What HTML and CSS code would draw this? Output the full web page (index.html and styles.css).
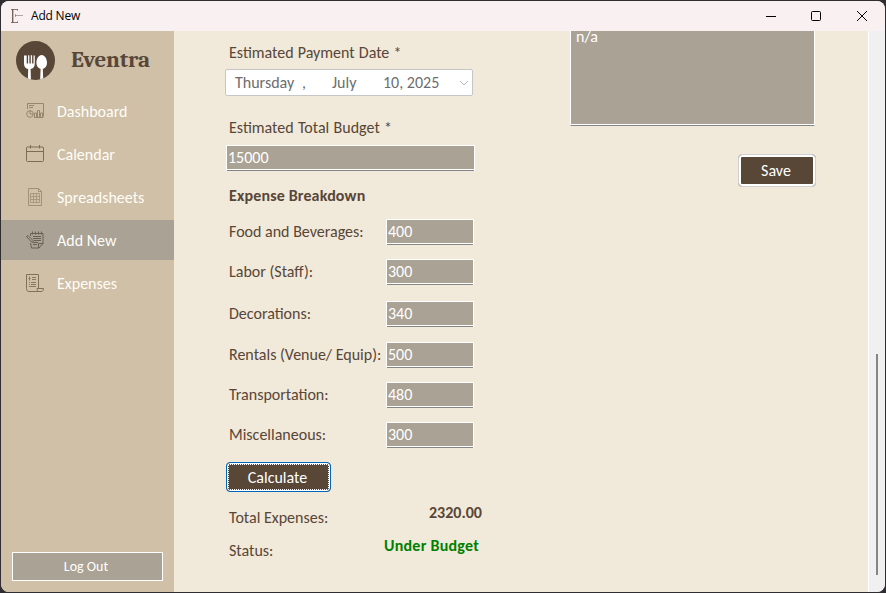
FILE: index.html
```html
<!DOCTYPE html>
<html lang="en">
<head>
<meta charset="utf-8">
<title>Add New</title>
<link rel="stylesheet" href="styles.css">
</head>
<body>
<div class="window">
  <header class="titlebar">
    <svg class="app-icon" width="14" height="16" viewBox="0 0 14 16" fill="none" stroke="#6b5a50"><path d="M8 1.5H1M8 14.5H1" stroke-width=".8"/><path d="M2.700 1v14" stroke-width="1.300"/><path d="M5 7.500h8M7.500 1v2M7.500 13v2M5.500 6v3" stroke-width=".5"/></svg>
    <span class="title">Add New</span>
    <svg class="controls" width="102" height="12" viewBox="0 0 102 12" fill="none" stroke="#000"><path d="M0 6.500h10"/><rect x="45.500" y="1.500" width="9" height="9" rx="1"/><path d="M91 1l10 10M101 1L91 11"/></svg>
  </header>
  <div class="body">
    <nav class="sidebar">
      <div class="brand">
        <svg width="39" height="39" viewBox="0 0 39 39"><defs><clipPath id="disc"><circle cx="19.500" cy="19.500" r="19.500"/></clipPath></defs><circle cx="19.500" cy="19.500" r="19.500" fill="#584637"/><g clip-path="url(#disc)" fill="#fff"><path d="M8 14.500v8c0 3.200 1.500 5 4.200 5.500l-.4 12h3.200l-.4-12c2.700-.5 4.200-2.300 4.200-5.500v-8h-1.300v8h-1.400v-8.300h-1.300v8.300h-1.400v-8.300h-1.300v8.300h-1.400v-8z"/><path d="M25.700 14c-3.100 0-5.300 3.800-5.300 7.800 0 3.200 1.500 5.400 4.200 6.100l-.5 12h3.200l-.5-12c2.700-.7 4.200-2.900 4.200-6.100 0-4-2.200-7.800-5.300-7.800z"/></g></svg>
        <span class="brand-name">Eventra</span>
      </div>
      <a class="item"><svg width="18" height="18" viewBox="0 0 18 18" fill="none" stroke="#96876f"><path d="M1.500 7V1.500h16v13M3 3.500h5M3 5.500h4M8 15.500h9.500"/><circle cx="4" cy="12" r="3.300"/><path d="M4 8.500V12h3M8.500 15v-4h2v4M11.500 15V8.500h2V15M14.500 15v-4h2v4"/></svg><span>Dashboard</span></a>
      <a class="item"><svg width="18" height="18" viewBox="0 0 18 18" fill="none" stroke="#7d6d57"><rect x=".5" y="2" width="17" height="14.500" rx="1"/><path d="M.5 6.500h17M4.500 0v3.500M13.500 0v3.500"/></svg><span>Calendar</span></a>
      <a class="item"><svg width="18" height="18" viewBox="0 0 18 18" fill="none" stroke="#a09179"><path d="M2.500.5h10l3 3v14h-13zM12.500.5v3h3"/><path d="M4.500 5.500h9v9h-9zM4.500 8.500h9M4.500 11.500h9M7.500 5.500v9M10.500 5.500v9" stroke-width=".8"/></svg><span>Spreadsheets</span></a>
      <a class="item active"><svg width="18" height="18" viewBox="0 0 18 18" fill="none" stroke="#6a5f53"><path d="M4.500 5V2.500h12.500v10l-4 4.500H5.500L4.500 12M12.500 17v-4.500H17M6.500.5v3M9.500.5v3M12.500.5v3M15.500.5v3M7 5.500h8M7 7.500h8M8 9.500h7M8 11.500h4M7 13.500h4M.5 5.500l1.500-1 5 5 .5 2-2-.5z"/></svg><span>Add New</span></a>
      <a class="item"><svg width="18" height="18" viewBox="0 0 18 18" fill="none" stroke="#817159"><path d="M12.500 14V.5H.5v14c0 2 1 3 2.500 3h12c1.500 0 2.500-1 2.500-3h-6.500c0 1.500.5 3 2 3"/><path d="M3.500 2.500v4M2.500 4.500h2M6 3.500h4M6 5.500h4M3 8.500h1M5 8.500h5M3 10.500h1M5 10.500h5M3 12.500h7" stroke-width=".9"/></svg><span>Expenses</span></a>
      <button class="logout">Log Out</button>
    </nav>
    <main class="content">
      <section class="form">
        <label class="label l-date">Estimated Payment Date *</label>
        <div class="date"><span class="d-day">Thursday</span><span class="d-comma">,</span><span class="d-month">July</span><span class="d-num">10, 2025</span><svg width="10" height="6" viewBox="0 0 10 6" fill="none" stroke="#b5b5b5"><path d="M1 1l4 4 4-4"/></svg></div>
        <label class="label l-budget">Estimated Total Budget *</label>
        <div class="field wide">15000</div>
        <h2 class="label heading">Expense Breakdown</h2>
        <div class="rows">
          <div class="row"><span class="label">Food and Beverages:</span><div class="field">400</div></div>
          <div class="row"><span class="label">Labor (Staff):</span><div class="field">300</div></div>
          <div class="row gap-l"><span class="label">Decorations:</span><div class="field">340</div></div>
          <div class="row gap-m"><span class="label">Rentals (Venue/ Equip):</span><div class="field">500</div></div>
          <div class="row"><span class="label">Transportation:</span><div class="field">480</div></div>
          <div class="row"><span class="label">Miscellaneous:</span><div class="field">300</div></div>
        </div>
        <button class="btn calc"><span>Calculate</span></button>
        <div class="result total"><span class="label">Total Expenses:</span><b>2320.00</b></div>
        <div class="result status"><span class="label">Status:</span><b>Under Budget</b></div>
      </section>
      <section class="side">
        <div class="notes">n/a</div>
        <button class="btn save"><span>Save</span></button>
      </section>
    </main>
    <div class="scroll"><div class="thumb"></div></div>
  </div>
</div>
</body>
</html>
```
FILE: styles.css
```css
* { box-sizing: border-box; }
body {
  margin: 0; width: 886px; height: 593px; padding: 1px; overflow: hidden;
  background: #302d31; color: #584637;
  font: 16px/20px Calibri, Carlito, Lato, sans-serif;
}
.window { height: 591px; width: 884px; border-radius: 8px; overflow: hidden; background: #f1e9da; }
.titlebar { height: 30px; background: #f9f0f1; display: flex; align-items: center; padding-left: 9px; }
.title { font: 12px/16px "Open Sans", sans-serif; color: #000; margin-left: 7px; letter-spacing: -.2px; }
.controls { margin-left: auto; margin-right: 17px; }
.body { display: flex; height: 561px; }
.sidebar { width: 173px; background: #cfc0a7; display: flex; flex-direction: column; }
.brand { height: 60px; padding: 10px 0 0 15px; display: flex; }
.brand-name { font: bold 23px/38px Cambria, Caladea, "Noto Serif", serif; margin-left: 16px; letter-spacing: -.15px; }
.item { height: 40px; margin-bottom: 3px; padding-left: 25px; display: flex; align-items: center; color: #fffdf8; }
.item span { margin: 1px 0 0 13px; }
.active { background: #aaa294; }
button { font: inherit; padding: 0; border: 0; color: #fff; }
.logout { margin: auto 11px 11px; height: 29px; padding-right: 3px; border: 1px solid #fff; background: #aaa294; font-size: 14px; }
.content { flex: 1; display: flex; }
.form { width: 396px; padding-left: 51px; display: flex; flex-direction: column; align-items: flex-start; }
.label { padding-left: 4px; white-space: nowrap; height: 20px; line-height: 21px; }
.l-date { margin-top: 11px; word-spacing: .5px; }
.date { width: 248px; height: 27px; margin-top: 7px; background: #fff; border: 1px solid #c6c6c6; border-radius: 2px; display: flex; align-items: center; color: #6d6d6d; padding-left: 9px; }
.d-day { width: 67px; }
.d-comma { width: 30px; }
.d-month { width: 51px; }
.d-num { width: 76px; }
.l-budget { margin-top: 21px; word-spacing: .7px; }
.field { width: 88px; height: 26px; border: 1px solid #fff; border-bottom: 0; box-shadow: inset 0 -1px #858585, inset 0 -2px #fff; background: #aaa294; color: #fff; line-height: 23px; padding-left: 1px; }
.wide { width: 249px; margin: 8px 0 0 1px; }
.heading { font-size: 16px; margin: 14px 0 0; letter-spacing: .15px; }
.rows { margin-top: 14px; }
.row { display: flex; align-items: center; height: 26px; margin-bottom: 14px; }
.row .label { width: 161px; margin-top: -2px; }
.gap-l { margin-top: 16px; }
.gap-m { margin-top: 15px; }
.btn { background: #584637; border-radius: 4px; }
.calc { width: 105px; height: 30px; margin-left: 1px; border: 1px solid #0067b8; box-shadow: inset 0 0 0 1px #fff; padding: 1px; }
.calc span { display: block; height: 26px; line-height: 26px; padding-right: 2px; border: 1px dotted #fff; }
.result { display: flex; height: 20px; }
.result .label { width: 159px; }
.total { margin-top: 15px; }
.status { margin-top: 13px; }
.result b { margin-top: -4px; }
.total b { margin-left: 45px; }
.status b { color: #008000; letter-spacing: .25px; }
.side { width: 245px; display: flex; flex-direction: column; align-items: flex-end; }
.notes { width: 245px; height: 95px; margin-left: -1px; background: #aaa294; border: 1px solid #fff; border-top: 0; border-bottom-color: #858585; box-shadow: inset 0 -1px #fff; color: #fff; padding-left: 5px; line-height: 12px; }
.save { width: 78px; height: 33px; margin: 28px -1px 0 0; padding: 1px 2px 0 0; border: 1px solid #d0d0d0; box-shadow: inset 0 0 0 2px #fff; }
.scroll { width: 17px; background: #f0f0f0; border-left: 1px solid #fff; padding: 323px 0 0 7px; }
.thumb { width: 2px; height: 221px; background: #858585; }
```
